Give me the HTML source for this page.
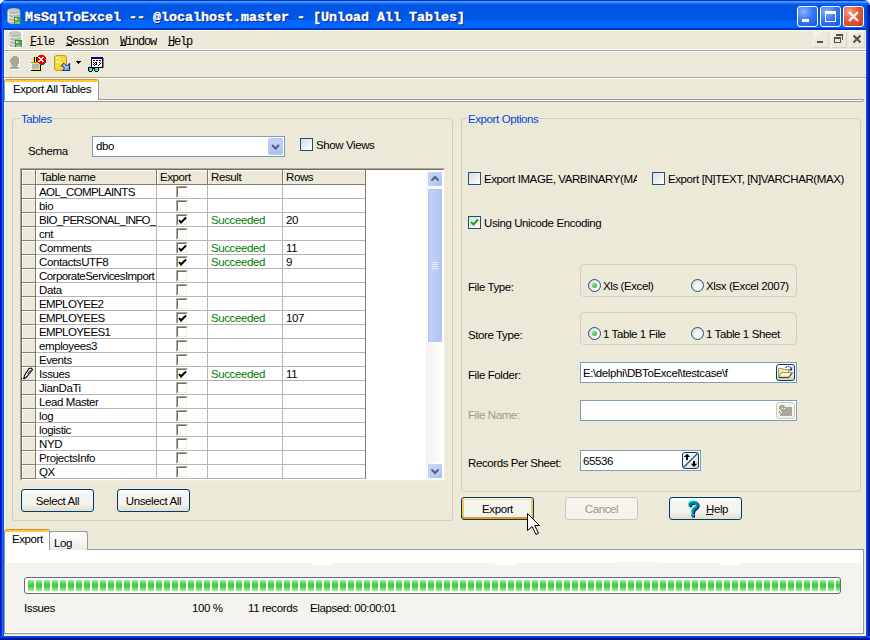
<!DOCTYPE html><html><head><meta charset="utf-8"><style>
*{box-sizing:border-box;margin:0;padding:0}
html,body{width:870px;height:640px;overflow:hidden;background:#fff}
body{position:relative;font-family:"Liberation Sans",sans-serif;font-size:11.5px;letter-spacing:-0.4px;color:#000}
.abs{position:absolute}
.t{position:absolute;white-space:pre;line-height:14px}
#win{position:absolute;left:0;top:0;width:870px;height:640px;background:#ECE9D8;border-radius:6px 6px 0 0;overflow:hidden}
#title{position:absolute;left:0;top:0;width:870px;height:30px;
 background:linear-gradient(180deg,#0030C8 0,#0030C8 1px,#3D95FF 1px,#3D95FF 3px,#0A66F2 3px,#0A66F2 5px,#0055E3 5px,#0056E6 20px,#0066FF 20px,#0066FF 28px,#0035C8 28px,#0035C8 30px)}
.mono{font-family:"Liberation Mono",monospace}
.gb{position:absolute;border:1px solid #D0D0BF;border-radius:3px}
.gbl{position:absolute;color:#0046D5;background:#ECE9D8;padding:0 1px;white-space:pre;line-height:14px}
.btn{position:absolute;border:1px solid #003C74;border-radius:3px;
 background:linear-gradient(180deg,#FFFFFF 0,#F7F6F2 3px,#F4F3EE 14px,#EAE6D9 17px,#E2DED0 100%);
 text-align:center;line-height:22px;white-space:pre}
.edit{position:absolute;border:1px solid #7F9DB9;background:#fff}
.cb{position:absolute;width:13px;height:13px;border:1px solid #1C5180;
 background:linear-gradient(135deg,#DCDCD7 0%,#FFFFFF 100%)}
.rad{position:absolute;width:13px;height:13px;border-radius:50%;border:1px solid #1C5180;
 background:radial-gradient(circle at 70% 70%,#fff 0%,#F2F2EE 40%,#D5D5CC 100%)}
</style></head><body><div id="win">
<div id="title"></div>
<div class="abs" style="left:865px;top:5px;width:5px;height:25px;background:linear-gradient(90deg,#0050E8 0,#0050E8 1px,#0044D8 1px,#0044D8 2px,#0030C0 2px,#0030C0 3px,#0020A8 3px,#0020A8 4px,#001890 4px)"></div>
<div class="abs" style="left:0;top:4px;width:3px;height:26px;background:linear-gradient(90deg,#0028C8 0,#0028C8 1px,#0040E0 1px,#0040E0 2px,#0058F0 2px)"></div>
<svg class="abs" style="left:7px;top:8px" width="16" height="17" viewBox="0 0 16 17"><path d="M0.8 2.8 Q0.8 0.6 6.8 0.6 Q12.8 0.6 12.8 2.8 V13.2 Q12.8 15.6 6.8 15.6 Q0.8 15.6 0.8 13.2 Z" fill="#B4B4B0" stroke="#C8C8B8" stroke-width="0.8"/><path d="M1.2 5.5 Q6.8 8 12.4 5.5 M1.2 9 Q6.8 11.5 12.4 9 M1.2 12.5 Q6.8 15 12.4 12.5" stroke="#F0F0E8" stroke-width="1.1" fill="none"/><path d="M1.5 3 V13" stroke="#F4F0DC" stroke-width="1.2"/><ellipse cx="6.8" cy="2.8" rx="5.6" ry="1.8" fill="#C8C8C4"/><rect x="7" y="9" width="7" height="7" fill="#3F7F3A"/><rect x="7.8" y="9.8" width="5.4" height="4" fill="#58B058"/><rect x="8" y="10" width="2" height="2" fill="#C8F0C0"/><rect x="8" y="14.5" width="5" height="1" fill="#E8F5E8"/></svg>
<div class="abs mono" style="left:26px;top:10px;font-weight:bold;font-size:13.33px;letter-spacing:0;line-height:18px;color:#0A1C6E;white-space:pre;-webkit-text-stroke:0.35px #0A1C6E">MsSqlToExcel -- @localhost.master - [Unload All Tables]</div>
<div class="abs mono" style="left:25px;top:9px;font-weight:bold;font-size:13.33px;letter-spacing:0;line-height:18px;color:#fff;white-space:pre;-webkit-text-stroke:0.35px #fff">MsSqlToExcel -- @localhost.master - [Unload All Tables]</div>
<div class="abs" style="left:797px;top:6px;width:21px;height:21px;border:1px solid #fff;border-radius:3px;background:radial-gradient(circle at 30% 25%,#8DB2FF 0%,#3C79F2 45%,#1650E0 100%)"><div class="abs" style="left:4px;top:12px;width:7px;height:3px;background:#fff"></div></div>
<div class="abs" style="left:820px;top:6px;width:21px;height:21px;border:1px solid #fff;border-radius:3px;background:radial-gradient(circle at 30% 25%,#8DB2FF 0%,#3C79F2 45%,#1650E0 100%)"><div class="abs" style="left:4px;top:4px;width:11px;height:11px;border:1px solid #fff;border-top-width:3px"></div></div>
<div class="abs" style="left:843px;top:6px;width:21px;height:21px;border:1px solid #fff;border-radius:3px;background:radial-gradient(circle at 30% 25%,#F4A58A 0%,#E4583A 45%,#D23A12 100%)"><svg class="abs" style="left:0;top:0" width="19" height="19"><path d="M5 5 L14 14 M14 5 L5 14" stroke="#fff" stroke-width="2.4"/></svg></div>
<div class="abs" style="left:0;top:29px;width:4px;height:611px;background:linear-gradient(90deg,#0010C0 0,#0010C0 1px,#0828D8 1px,#0828D8 2px,#1A74F0 2px,#1A74F0 3px,#0050E6 3px)"></div>
<div class="abs" style="left:866px;top:29px;width:4px;height:611px;background:linear-gradient(90deg,#0050F0 0,#0050F0 1px,#0040D0 1px,#0040D0 2px,#0020A8 2px,#0020A8 3px,#001090 3px)"></div>
<div class="abs" style="left:0;top:636px;width:870px;height:4px;background:linear-gradient(180deg,#0055F0 0,#0055F0 1px,#0040D0 1px,#0040D0 2px,#0018A0 2px,#0018A0 3px,#001088 3px)"></div>
<div class="abs" style="left:4px;top:30px;width:862px;height:1px;background:#FFF8E8"></div>
<div class="abs" style="left:4px;top:30px;width:1px;height:606px;background:#FFF5DC"></div>
<div class="abs" style="left:865px;top:30px;width:1px;height:606px;background:#F5EED5"></div>
<div class="abs" style="left:4px;top:635px;width:862px;height:1px;background:#F5EED5"></div>
<svg class="abs" style="left:8px;top:31px" width="16" height="17" viewBox="0 0 16 17"><rect x="0" y="0" width="15" height="17" fill="#fff"/><path d="M0.8 2.8 Q0.8 0.6 6.8 0.6 Q12.8 0.6 12.8 2.8 V13.2 Q12.8 15.6 6.8 15.6 Q0.8 15.6 0.8 13.2 Z" fill="#B4B4B0" stroke="#C8C8B8" stroke-width="0.8"/><path d="M1.2 5.5 Q6.8 8 12.4 5.5 M1.2 9 Q6.8 11.5 12.4 9 M1.2 12.5 Q6.8 15 12.4 12.5" stroke="#F0F0E8" stroke-width="1.1" fill="none"/><path d="M1.5 3 V13" stroke="#F4F0DC" stroke-width="1.2"/><ellipse cx="6.8" cy="2.8" rx="5.6" ry="1.8" fill="#C8C8C4"/><rect x="7" y="9" width="7" height="7" fill="#3F7F3A"/><rect x="7.8" y="9.8" width="5.4" height="4" fill="#58B058"/><rect x="8" y="10" width="2" height="2" fill="#C8F0C0"/><rect x="8" y="14.5" width="5" height="1" fill="#E8F5E8"/></svg>
<div class="abs mono" style="left:30px;top:35px;font-size:12px;letter-spacing:-1.2px;line-height:14px;white-space:pre">File</div>
<div class="abs" style="left:30px;top:45px;width:6px;height:1px;background:#000"></div>
<div class="abs mono" style="left:66px;top:35px;font-size:12px;letter-spacing:-1.2px;line-height:14px;white-space:pre">Session</div>
<div class="abs" style="left:66px;top:45px;width:6px;height:1px;background:#000"></div>
<div class="abs mono" style="left:120px;top:35px;font-size:12px;letter-spacing:-1.2px;line-height:14px;white-space:pre">Window</div>
<div class="abs" style="left:120px;top:45px;width:6px;height:1px;background:#000"></div>
<div class="abs mono" style="left:168px;top:35px;font-size:12px;letter-spacing:-1.2px;line-height:14px;white-space:pre">Help</div>
<div class="abs" style="left:168px;top:45px;width:6px;height:1px;background:#000"></div>
<div class="abs" style="left:813px;top:31px;width:16px;height:17px;background:linear-gradient(135deg,#F8F6EE 0%,#ECE9D8 35%,#ECE9D8 100%);border:1px solid #F4F2EA;border-right-color:#DCD8C8;border-bottom-color:#D8D4C4"><div class="abs" style="left:3px;top:9px;width:6px;height:2px;background:#505050"></div></div>
<div class="abs" style="left:831px;top:31px;width:16px;height:17px;background:linear-gradient(135deg,#F8F6EE 0%,#ECE9D8 35%,#ECE9D8 100%);border:1px solid #F4F2EA;border-right-color:#DCD8C8;border-bottom-color:#D8D4C4"><div class="abs" style="left:4px;top:2px;width:7px;height:6px;border-top:2px solid #505050;border-right:1px solid #505050"></div><div class="abs" style="left:2px;top:5px;width:7px;height:6px;border:1px solid #505050;border-top-width:2px;background:#ECE9D8"></div></div>
<div class="abs" style="left:849px;top:31px;width:16px;height:17px;background:linear-gradient(135deg,#F8F6EE 0%,#ECE9D8 35%,#ECE9D8 100%);border:1px solid #F4F2EA;border-right-color:#DCD8C8;border-bottom-color:#D8D4C4"><svg class="abs" style="left:0;top:0" width="15" height="16"><path d="M3.5 3.5 L10.5 10.5 M10.5 3.5 L3.5 10.5" stroke="#505050" stroke-width="2"/></svg></div>
<div class="abs" style="left:4px;top:49px;width:862px;height:1px;background:#FFFFFF"></div>
<div class="abs" style="left:4px;top:50px;width:862px;height:1px;background:#ACA899"></div>
<div class="abs" style="left:4px;top:51px;width:862px;height:1px;background:#fff"></div>
<svg class="abs" style="left:0;top:0" width="110" height="80" shape-rendering="crispEdges"><rect x="13" y="56" width="4" height="1" fill="#ACA899"/><rect x="12" y="57" width="6" height="1" fill="#ACA899"/><rect x="11" y="58" width="8" height="1" fill="#ACA899"/><rect x="10" y="59" width="9" height="1" fill="#ACA899"/><rect x="10" y="60" width="9" height="1" fill="#ACA899"/><rect x="10" y="61" width="9" height="1" fill="#ACA899"/><rect x="10" y="62" width="9" height="1" fill="#ACA899"/><rect x="11" y="63" width="8" height="1" fill="#ACA899"/><rect x="11" y="64" width="7" height="1" fill="#ACA899"/><rect x="12" y="65" width="6" height="1" fill="#ACA899"/><rect x="12" y="66" width="5" height="1" fill="#ACA899"/><rect x="10" y="67" width="9" height="1" fill="#ACA899"/><rect x="10" y="68" width="9" height="1" fill="#ACA899"/><rect x="19" y="59" width="1" height="1" fill="#FFFFFF"/><rect x="19" y="60" width="1" height="1" fill="#FFFFFF"/><rect x="19" y="62" width="1" height="1" fill="#FFFFFF"/><rect x="19" y="63" width="1" height="1" fill="#FFFFFF"/><rect x="18" y="64" width="2" height="1" fill="#FFFFFF"/><rect x="18" y="65" width="1" height="1" fill="#FFFFFF"/><rect x="17" y="66" width="1" height="1" fill="#FFFFFF"/><rect x="11" y="69" width="9" height="1" fill="#FFFFFF"/><rect x="31" y="62" width="8" height="1" fill="#8C8C80"/><rect x="31" y="63" width="1" height="7" fill="#FFFFFF"/><rect x="32" y="63" width="8" height="1" fill="#F8F000"/><rect x="32" y="64" width="7" height="5" fill="#B4B4C4"/><rect x="39" y="63" width="1" height="7" fill="#F8F000"/><rect x="32" y="69" width="8" height="1" fill="#F8F000"/><rect x="40" y="63" width="1" height="8" fill="#000"/><rect x="31" y="70" width="10" height="1" fill="#000"/><rect x="33" y="57" width="1" height="5" fill="#F8F000"/><rect x="34" y="56" width="3" height="1" fill="#F8F000"/><rect x="34" y="57" width="1" height="5" fill="#000"/><rect x="35" y="57" width="1" height="5" fill="#E8E8E0"/><rect x="36" y="57" width="1" height="5" fill="#000"/><rect x="39" y="55" width="5" height="1" fill="#F00000"/><rect x="38" y="56" width="7" height="1" fill="#F00000"/><rect x="37" y="57" width="9" height="1" fill="#F00000"/><rect x="37" y="58" width="9" height="1" fill="#F00000"/><rect x="37" y="59" width="9" height="1" fill="#F00000"/><rect x="37" y="60" width="9" height="1" fill="#F00000"/><rect x="37" y="61" width="9" height="1" fill="#F00000"/><rect x="38" y="62" width="7" height="1" fill="#F00000"/><rect x="39" y="63" width="5" height="1" fill="#F00000"/><rect x="45" y="62" width="1" height="1" fill="#205050"/><rect x="44" y="63" width="1" height="1" fill="#205050"/><rect x="40" y="64" width="4" height="1" fill="#205050"/><rect x="38" y="57" width="2" height="1" fill="#FFFFFF"/><rect x="42" y="57" width="2" height="1" fill="#FFFFFF"/><rect x="39" y="58" width="2" height="1" fill="#FFFFFF"/><rect x="41" y="58" width="2" height="1" fill="#FFFFFF"/><rect x="40" y="59" width="2" height="1" fill="#FFFFFF"/><rect x="40" y="59" width="2" height="1" fill="#FFFFFF"/><rect x="41" y="60" width="2" height="1" fill="#FFFFFF"/><rect x="39" y="60" width="2" height="1" fill="#FFFFFF"/><rect x="42" y="61" width="2" height="1" fill="#FFFFFF"/><rect x="38" y="61" width="2" height="1" fill="#FFFFFF"/><rect x="76" y="61" width="5" height="1" fill="#000"/><rect x="77" y="62" width="3" height="1" fill="#000"/><rect x="78" y="63" width="1" height="1" fill="#000"/><rect x="91" y="57" width="12" height="2" fill="#000080"/><rect x="91" y="59" width="1" height="9" fill="#000"/><rect x="102" y="59" width="1" height="9" fill="#000"/><rect x="92" y="59" width="10" height="8" fill="#FFFFFF"/><rect x="91" y="67" width="12" height="1" fill="#000"/><rect x="103" y="58" width="1" height="10" fill="#808080"/><rect x="93" y="60" width="2" height="1" fill="#000"/><rect x="96" y="60" width="2" height="1" fill="#000"/><rect x="99" y="60" width="2" height="1" fill="#000"/><rect x="93" y="62" width="1" height="1" fill="#000"/><rect x="95" y="62" width="2" height="1" fill="#000"/><rect x="99" y="62" width="1" height="1" fill="#000"/><rect x="94" y="63" width="1" height="1" fill="#000"/><rect x="96" y="63" width="1" height="2" fill="#000"/><rect x="93" y="64" width="1" height="1" fill="#000"/><rect x="95" y="64" width="1" height="1" fill="#000"/><rect x="100" y="63" width="1" height="1" fill="#000"/><rect x="99" y="64" width="1" height="1" fill="#000"/><rect x="98" y="65" width="1" height="1" fill="#000"/><rect x="94" y="65" width="1" height="1" fill="#000"/><rect x="88" y="67" width="5" height="1" fill="#000"/><rect x="88" y="68" width="1" height="3" fill="#000"/><rect x="89" y="68" width="3" height="3" fill="#00E8F0"/><rect x="92" y="68" width="4" height="1" fill="#000"/><rect x="89" y="71" width="3" height="1" fill="#000"/><rect x="92" y="69" width="1" height="2" fill="#000"/><rect x="94" y="67" width="5" height="1" fill="#000"/><rect x="94" y="68" width="1" height="3" fill="#000"/><rect x="95" y="68" width="3" height="3" fill="#00E8F0"/><rect x="98" y="68" width="1" height="3" fill="#000"/><rect x="95" y="71" width="3" height="1" fill="#000"/><rect x="90" y="70" width="1" height="1" fill="#FFC0C0"/><rect x="96" y="70" width="1" height="1" fill="#FFC0C0"/></svg>
<svg class="abs" style="left:0;top:0" width="110" height="80">
<path d="M54.5 57.5 Q54.5 55.5 57 55.5 H64 Q66.5 55.5 66.5 57.5 V68 Q66.5 70.5 64 70.5 H57 Q54.5 70.5 54.5 68 Z" fill="#F4D838" stroke="#B49A40" stroke-width="1"/>
<path d="M56 58 Q58 57 60 59 M56 62 Q58 61 61 63" stroke="#FFF8A0" stroke-width="1.5" fill="none"/>
<path d="M60 66 Q62 67 64 65" stroke="#E8A818" stroke-width="1.5" fill="none"/>
<path d="M61.5 65.5 L63.8 63.2 L66.8 66.2 L69.5 63.3 V70.5 H62.3 L64.6 68.2 Z" fill="#70A8E8" stroke="#101830" stroke-width="0.9"/>
<path d="M63.5 64.5 L66 67 M65 69 L68 66" stroke="#A0C8FF" stroke-width="1.2"/>
<path d="M62.3 70.5 H69.5 V63.3" stroke="#1830A0" stroke-width="1.2" fill="none"/>
</svg>
<div class="abs" style="left:4px;top:77px;width:862px;height:1px;background:#ACA899"></div>
<div class="abs" style="left:4px;top:78px;width:862px;height:1px;background:#fff"></div>
<div class="abs" style="left:4px;top:99px;width:860px;height:3px;border:1px solid #919B9C;border-top-color:#919B9C;background:#fff;border-radius:0 0 2px 0"></div>
<div class="abs" style="left:4px;top:79px;width:95px;height:21px;background:#fff;border-left:1px solid #919B9C;border-right:1px solid #919B9C;border-radius:3px 3px 0 0"></div>
<div class="abs" style="left:5px;top:79px;width:93px;height:3px;background:linear-gradient(180deg,#E68B2C 0,#E68B2C 1px,#FFC73C 1px,#FFC73C 3px);border-radius:2px 2px 0 0"></div>
<div class="t" style="left:13px;top:82px">Export All Tables</div>
<div class="abs" style="left:5px;top:99px;width:93px;height:2px;background:#fff"></div>
<div class="gb" style="left:12px;top:118px;width:441px;height:403px"></div>
<div class="gbl" style="left:20px;top:112px">Tables</div>
<div class="t" style="left:28px;top:144px">Schema</div>
<div class="edit" style="left:92px;top:136px;width:193px;height:21px"></div>
<div class="t" style="left:96px;top:139px">dbo</div>
<div class="abs" style="left:268px;top:138px;width:15px;height:17px;border-radius:2px;background:linear-gradient(180deg,#C6D3F7 0%,#BACAF5 60%,#A9BDF0 100%);border:1px solid #B9C9EF"></div>
<svg class="abs" style="left:268px;top:138px" width="15" height="17"><path d="M4 7 L7.5 10.5 L11 7" stroke="#4D6185" stroke-width="2" fill="none"/></svg>
<div class="cb" style="left:300px;top:138px"></div>
<div class="t" style="left:316px;top:138px">Show Views</div>
<div class="abs" style="left:20px;top:168px;width:425px;height:313px;border:1px solid #ACA899;border-right-color:#F1EFE2;border-bottom-color:#F1EFE2"></div>
<div class="abs" style="left:21px;top:169px;width:423px;height:311px;border:1px solid #716F64;border-right-color:#fff;border-bottom-color:#fff;background:#fff"></div>
<div class="abs" style="left:22px;top:170px;width:343px;height:14px;background:#ECE9D8"></div>
<div class="abs" style="left:22px;top:170px;width:13px;height:14px;border-top:1px solid #fff;border-left:1px solid #fff"></div>
<div class="abs" style="left:36px;top:170px;width:120px;height:14px;border-top:1px solid #fff;border-left:1px solid #fff"></div>
<div class="abs" style="left:157px;top:170px;width:50px;height:14px;border-top:1px solid #fff;border-left:1px solid #fff"></div>
<div class="abs" style="left:208px;top:170px;width:74px;height:14px;border-top:1px solid #fff;border-left:1px solid #fff"></div>
<div class="abs" style="left:283px;top:170px;width:82px;height:14px;border-top:1px solid #fff;border-left:1px solid #fff"></div>
<div class="abs" style="left:35px;top:170px;width:1px;height:15px;background:#7F7D72"></div>
<div class="abs" style="left:156px;top:170px;width:1px;height:15px;background:#7F7D72"></div>
<div class="abs" style="left:207px;top:170px;width:1px;height:15px;background:#7F7D72"></div>
<div class="abs" style="left:282px;top:170px;width:1px;height:15px;background:#7F7D72"></div>
<div class="abs" style="left:365px;top:170px;width:1px;height:15px;background:#7F7D72"></div>
<div class="abs" style="left:22px;top:184px;width:344px;height:1px;background:#7F7D72"></div>
<div class="t" style="left:40px;top:170px">Table name</div>
<div class="t" style="left:160px;top:170px">Export</div>
<div class="t" style="left:211px;top:170px">Result</div>
<div class="t" style="left:286px;top:170px">Rows</div>
<div class="abs" style="left:22px;top:185px;width:13px;height:13px;background:#ECE9D8;border-top:1px solid #fff;border-left:1px solid #fff"></div>
<div class="abs" style="left:22px;top:198px;width:344px;height:1px;background:#B5B5B5"></div>
<div class="abs" style="left:22px;top:198px;width:14px;height:1px;background:#808080"></div>
<div class="abs" style="left:35px;top:185px;width:1px;height:14px;background:#7F7D72"></div>
<div class="t" style="left:39px;top:185px;width:118px;overflow:hidden;letter-spacing:-0.6px">AOL_COMPLAINTS</div>
<div class="abs" style="left:176px;top:186px;width:12px;height:12px;border:1px solid #ACA899;border-right-color:#fff;border-bottom-color:#fff"><div class="abs" style="left:0;top:0;width:10px;height:10px;border:1px solid #716F64;border-right-color:#F1EFE2;border-bottom-color:#F1EFE2;background:#fff"></div></div>
<div class="abs" style="left:22px;top:199px;width:13px;height:13px;background:#ECE9D8;border-top:1px solid #fff;border-left:1px solid #fff"></div>
<div class="abs" style="left:22px;top:212px;width:344px;height:1px;background:#B5B5B5"></div>
<div class="abs" style="left:22px;top:212px;width:14px;height:1px;background:#808080"></div>
<div class="abs" style="left:35px;top:199px;width:1px;height:14px;background:#7F7D72"></div>
<div class="t" style="left:39px;top:199px;width:118px;overflow:hidden;letter-spacing:-0.4px">bio</div>
<div class="abs" style="left:176px;top:200px;width:12px;height:12px;border:1px solid #ACA899;border-right-color:#fff;border-bottom-color:#fff"><div class="abs" style="left:0;top:0;width:10px;height:10px;border:1px solid #716F64;border-right-color:#F1EFE2;border-bottom-color:#F1EFE2;background:#fff"></div></div>
<div class="abs" style="left:22px;top:213px;width:13px;height:13px;background:#ECE9D8;border-top:1px solid #fff;border-left:1px solid #fff"></div>
<div class="abs" style="left:22px;top:226px;width:344px;height:1px;background:#B5B5B5"></div>
<div class="abs" style="left:22px;top:226px;width:14px;height:1px;background:#808080"></div>
<div class="abs" style="left:35px;top:213px;width:1px;height:14px;background:#7F7D72"></div>
<div class="t" style="left:39px;top:213px;width:118px;overflow:hidden;letter-spacing:-0.7px">BIO_PERSONAL_INFO_</div>
<div class="abs" style="left:176px;top:214px;width:12px;height:12px;border:1px solid #ACA899;border-right-color:#fff;border-bottom-color:#fff"><div class="abs" style="left:0;top:0;width:10px;height:10px;border:1px solid #716F64;border-right-color:#F1EFE2;border-bottom-color:#F1EFE2;background:#fff"></div></div>
<svg class="abs" style="left:178px;top:216px" width="9" height="9"><path d="M1 4 L3 6.5 L8 1.5" stroke="#000" stroke-width="2" fill="none"/></svg>
<div class="t" style="left:211px;top:213px;color:#008000">Succeeded</div>
<div class="t" style="left:286px;top:213px">20</div>
<div class="abs" style="left:22px;top:227px;width:13px;height:13px;background:#ECE9D8;border-top:1px solid #fff;border-left:1px solid #fff"></div>
<div class="abs" style="left:22px;top:240px;width:344px;height:1px;background:#B5B5B5"></div>
<div class="abs" style="left:22px;top:240px;width:14px;height:1px;background:#808080"></div>
<div class="abs" style="left:35px;top:227px;width:1px;height:14px;background:#7F7D72"></div>
<div class="t" style="left:39px;top:227px;width:118px;overflow:hidden;letter-spacing:-0.4px">cnt</div>
<div class="abs" style="left:176px;top:228px;width:12px;height:12px;border:1px solid #ACA899;border-right-color:#fff;border-bottom-color:#fff"><div class="abs" style="left:0;top:0;width:10px;height:10px;border:1px solid #716F64;border-right-color:#F1EFE2;border-bottom-color:#F1EFE2;background:#fff"></div></div>
<div class="abs" style="left:22px;top:241px;width:13px;height:13px;background:#ECE9D8;border-top:1px solid #fff;border-left:1px solid #fff"></div>
<div class="abs" style="left:22px;top:254px;width:344px;height:1px;background:#B5B5B5"></div>
<div class="abs" style="left:22px;top:254px;width:14px;height:1px;background:#808080"></div>
<div class="abs" style="left:35px;top:241px;width:1px;height:14px;background:#7F7D72"></div>
<div class="t" style="left:39px;top:241px;width:118px;overflow:hidden;letter-spacing:-0.4px">Comments</div>
<div class="abs" style="left:176px;top:242px;width:12px;height:12px;border:1px solid #ACA899;border-right-color:#fff;border-bottom-color:#fff"><div class="abs" style="left:0;top:0;width:10px;height:10px;border:1px solid #716F64;border-right-color:#F1EFE2;border-bottom-color:#F1EFE2;background:#fff"></div></div>
<svg class="abs" style="left:178px;top:244px" width="9" height="9"><path d="M1 4 L3 6.5 L8 1.5" stroke="#000" stroke-width="2" fill="none"/></svg>
<div class="t" style="left:211px;top:241px;color:#008000">Succeeded</div>
<div class="t" style="left:286px;top:241px">11</div>
<div class="abs" style="left:22px;top:255px;width:13px;height:13px;background:#ECE9D8;border-top:1px solid #fff;border-left:1px solid #fff"></div>
<div class="abs" style="left:22px;top:268px;width:344px;height:1px;background:#B5B5B5"></div>
<div class="abs" style="left:22px;top:268px;width:14px;height:1px;background:#808080"></div>
<div class="abs" style="left:35px;top:255px;width:1px;height:14px;background:#7F7D72"></div>
<div class="t" style="left:39px;top:255px;width:118px;overflow:hidden;letter-spacing:-0.4px">ContactsUTF8</div>
<div class="abs" style="left:176px;top:256px;width:12px;height:12px;border:1px solid #ACA899;border-right-color:#fff;border-bottom-color:#fff"><div class="abs" style="left:0;top:0;width:10px;height:10px;border:1px solid #716F64;border-right-color:#F1EFE2;border-bottom-color:#F1EFE2;background:#fff"></div></div>
<svg class="abs" style="left:178px;top:258px" width="9" height="9"><path d="M1 4 L3 6.5 L8 1.5" stroke="#000" stroke-width="2" fill="none"/></svg>
<div class="t" style="left:211px;top:255px;color:#008000">Succeeded</div>
<div class="t" style="left:286px;top:255px">9</div>
<div class="abs" style="left:22px;top:269px;width:13px;height:13px;background:#ECE9D8;border-top:1px solid #fff;border-left:1px solid #fff"></div>
<div class="abs" style="left:22px;top:282px;width:344px;height:1px;background:#B5B5B5"></div>
<div class="abs" style="left:22px;top:282px;width:14px;height:1px;background:#808080"></div>
<div class="abs" style="left:35px;top:269px;width:1px;height:14px;background:#7F7D72"></div>
<div class="t" style="left:39px;top:269px;width:118px;overflow:hidden;letter-spacing:-0.55px">CorporateServicesImport</div>
<div class="abs" style="left:176px;top:270px;width:12px;height:12px;border:1px solid #ACA899;border-right-color:#fff;border-bottom-color:#fff"><div class="abs" style="left:0;top:0;width:10px;height:10px;border:1px solid #716F64;border-right-color:#F1EFE2;border-bottom-color:#F1EFE2;background:#fff"></div></div>
<div class="abs" style="left:22px;top:283px;width:13px;height:13px;background:#ECE9D8;border-top:1px solid #fff;border-left:1px solid #fff"></div>
<div class="abs" style="left:22px;top:296px;width:344px;height:1px;background:#B5B5B5"></div>
<div class="abs" style="left:22px;top:296px;width:14px;height:1px;background:#808080"></div>
<div class="abs" style="left:35px;top:283px;width:1px;height:14px;background:#7F7D72"></div>
<div class="t" style="left:39px;top:283px;width:118px;overflow:hidden;letter-spacing:-0.4px">Data</div>
<div class="abs" style="left:176px;top:284px;width:12px;height:12px;border:1px solid #ACA899;border-right-color:#fff;border-bottom-color:#fff"><div class="abs" style="left:0;top:0;width:10px;height:10px;border:1px solid #716F64;border-right-color:#F1EFE2;border-bottom-color:#F1EFE2;background:#fff"></div></div>
<div class="abs" style="left:22px;top:297px;width:13px;height:13px;background:#ECE9D8;border-top:1px solid #fff;border-left:1px solid #fff"></div>
<div class="abs" style="left:22px;top:310px;width:344px;height:1px;background:#B5B5B5"></div>
<div class="abs" style="left:22px;top:310px;width:14px;height:1px;background:#808080"></div>
<div class="abs" style="left:35px;top:297px;width:1px;height:14px;background:#7F7D72"></div>
<div class="t" style="left:39px;top:297px;width:118px;overflow:hidden;letter-spacing:-0.6px">EMPLOYEE2</div>
<div class="abs" style="left:176px;top:298px;width:12px;height:12px;border:1px solid #ACA899;border-right-color:#fff;border-bottom-color:#fff"><div class="abs" style="left:0;top:0;width:10px;height:10px;border:1px solid #716F64;border-right-color:#F1EFE2;border-bottom-color:#F1EFE2;background:#fff"></div></div>
<div class="abs" style="left:22px;top:311px;width:13px;height:13px;background:#ECE9D8;border-top:1px solid #fff;border-left:1px solid #fff"></div>
<div class="abs" style="left:22px;top:324px;width:344px;height:1px;background:#B5B5B5"></div>
<div class="abs" style="left:22px;top:324px;width:14px;height:1px;background:#808080"></div>
<div class="abs" style="left:35px;top:311px;width:1px;height:14px;background:#7F7D72"></div>
<div class="t" style="left:39px;top:311px;width:118px;overflow:hidden;letter-spacing:-0.6px">EMPLOYEES</div>
<div class="abs" style="left:176px;top:312px;width:12px;height:12px;border:1px solid #ACA899;border-right-color:#fff;border-bottom-color:#fff"><div class="abs" style="left:0;top:0;width:10px;height:10px;border:1px solid #716F64;border-right-color:#F1EFE2;border-bottom-color:#F1EFE2;background:#fff"></div></div>
<svg class="abs" style="left:178px;top:314px" width="9" height="9"><path d="M1 4 L3 6.5 L8 1.5" stroke="#000" stroke-width="2" fill="none"/></svg>
<div class="t" style="left:211px;top:311px;color:#008000">Succeeded</div>
<div class="t" style="left:286px;top:311px">107</div>
<div class="abs" style="left:22px;top:325px;width:13px;height:13px;background:#ECE9D8;border-top:1px solid #fff;border-left:1px solid #fff"></div>
<div class="abs" style="left:22px;top:338px;width:344px;height:1px;background:#B5B5B5"></div>
<div class="abs" style="left:22px;top:338px;width:14px;height:1px;background:#808080"></div>
<div class="abs" style="left:35px;top:325px;width:1px;height:14px;background:#7F7D72"></div>
<div class="t" style="left:39px;top:325px;width:118px;overflow:hidden;letter-spacing:-0.6px">EMPLOYEES1</div>
<div class="abs" style="left:176px;top:326px;width:12px;height:12px;border:1px solid #ACA899;border-right-color:#fff;border-bottom-color:#fff"><div class="abs" style="left:0;top:0;width:10px;height:10px;border:1px solid #716F64;border-right-color:#F1EFE2;border-bottom-color:#F1EFE2;background:#fff"></div></div>
<div class="abs" style="left:22px;top:339px;width:13px;height:13px;background:#ECE9D8;border-top:1px solid #fff;border-left:1px solid #fff"></div>
<div class="abs" style="left:22px;top:352px;width:344px;height:1px;background:#B5B5B5"></div>
<div class="abs" style="left:22px;top:352px;width:14px;height:1px;background:#808080"></div>
<div class="abs" style="left:35px;top:339px;width:1px;height:14px;background:#7F7D72"></div>
<div class="t" style="left:39px;top:339px;width:118px;overflow:hidden;letter-spacing:-0.4px">employees3</div>
<div class="abs" style="left:176px;top:340px;width:12px;height:12px;border:1px solid #ACA899;border-right-color:#fff;border-bottom-color:#fff"><div class="abs" style="left:0;top:0;width:10px;height:10px;border:1px solid #716F64;border-right-color:#F1EFE2;border-bottom-color:#F1EFE2;background:#fff"></div></div>
<div class="abs" style="left:22px;top:353px;width:13px;height:13px;background:#ECE9D8;border-top:1px solid #fff;border-left:1px solid #fff"></div>
<div class="abs" style="left:22px;top:366px;width:344px;height:1px;background:#B5B5B5"></div>
<div class="abs" style="left:22px;top:366px;width:14px;height:1px;background:#808080"></div>
<div class="abs" style="left:35px;top:353px;width:1px;height:14px;background:#7F7D72"></div>
<div class="t" style="left:39px;top:353px;width:118px;overflow:hidden;letter-spacing:-0.4px">Events</div>
<div class="abs" style="left:176px;top:354px;width:12px;height:12px;border:1px solid #ACA899;border-right-color:#fff;border-bottom-color:#fff"><div class="abs" style="left:0;top:0;width:10px;height:10px;border:1px solid #716F64;border-right-color:#F1EFE2;border-bottom-color:#F1EFE2;background:#fff"></div></div>
<div class="abs" style="left:22px;top:367px;width:13px;height:13px;background:#ECE9D8;border-top:1px solid #fff;border-left:1px solid #fff"></div>
<div class="abs" style="left:22px;top:380px;width:344px;height:1px;background:#B5B5B5"></div>
<div class="abs" style="left:22px;top:380px;width:14px;height:1px;background:#808080"></div>
<div class="abs" style="left:35px;top:367px;width:1px;height:14px;background:#7F7D72"></div>
<div class="t" style="left:39px;top:367px;width:118px;overflow:hidden;letter-spacing:-0.4px">Issues</div>
<div class="abs" style="left:176px;top:368px;width:12px;height:12px;border:1px solid #ACA899;border-right-color:#fff;border-bottom-color:#fff"><div class="abs" style="left:0;top:0;width:10px;height:10px;border:1px solid #716F64;border-right-color:#F1EFE2;border-bottom-color:#F1EFE2;background:#fff"></div></div>
<svg class="abs" style="left:178px;top:370px" width="9" height="9"><path d="M1 4 L3 6.5 L8 1.5" stroke="#000" stroke-width="2" fill="none"/></svg>
<div class="t" style="left:211px;top:367px;color:#008000">Succeeded</div>
<div class="t" style="left:286px;top:367px">11</div>
<div class="abs" style="left:22px;top:381px;width:13px;height:13px;background:#ECE9D8;border-top:1px solid #fff;border-left:1px solid #fff"></div>
<div class="abs" style="left:22px;top:394px;width:344px;height:1px;background:#B5B5B5"></div>
<div class="abs" style="left:22px;top:394px;width:14px;height:1px;background:#808080"></div>
<div class="abs" style="left:35px;top:381px;width:1px;height:14px;background:#7F7D72"></div>
<div class="t" style="left:39px;top:381px;width:118px;overflow:hidden;letter-spacing:-0.4px">JianDaTi</div>
<div class="abs" style="left:176px;top:382px;width:12px;height:12px;border:1px solid #ACA899;border-right-color:#fff;border-bottom-color:#fff"><div class="abs" style="left:0;top:0;width:10px;height:10px;border:1px solid #716F64;border-right-color:#F1EFE2;border-bottom-color:#F1EFE2;background:#fff"></div></div>
<div class="abs" style="left:22px;top:395px;width:13px;height:13px;background:#ECE9D8;border-top:1px solid #fff;border-left:1px solid #fff"></div>
<div class="abs" style="left:22px;top:408px;width:344px;height:1px;background:#B5B5B5"></div>
<div class="abs" style="left:22px;top:408px;width:14px;height:1px;background:#808080"></div>
<div class="abs" style="left:35px;top:395px;width:1px;height:14px;background:#7F7D72"></div>
<div class="t" style="left:39px;top:395px;width:118px;overflow:hidden;letter-spacing:-0.4px">Lead Master</div>
<div class="abs" style="left:176px;top:396px;width:12px;height:12px;border:1px solid #ACA899;border-right-color:#fff;border-bottom-color:#fff"><div class="abs" style="left:0;top:0;width:10px;height:10px;border:1px solid #716F64;border-right-color:#F1EFE2;border-bottom-color:#F1EFE2;background:#fff"></div></div>
<div class="abs" style="left:22px;top:409px;width:13px;height:13px;background:#ECE9D8;border-top:1px solid #fff;border-left:1px solid #fff"></div>
<div class="abs" style="left:22px;top:422px;width:344px;height:1px;background:#B5B5B5"></div>
<div class="abs" style="left:22px;top:422px;width:14px;height:1px;background:#808080"></div>
<div class="abs" style="left:35px;top:409px;width:1px;height:14px;background:#7F7D72"></div>
<div class="t" style="left:39px;top:409px;width:118px;overflow:hidden;letter-spacing:-0.4px">log</div>
<div class="abs" style="left:176px;top:410px;width:12px;height:12px;border:1px solid #ACA899;border-right-color:#fff;border-bottom-color:#fff"><div class="abs" style="left:0;top:0;width:10px;height:10px;border:1px solid #716F64;border-right-color:#F1EFE2;border-bottom-color:#F1EFE2;background:#fff"></div></div>
<div class="abs" style="left:22px;top:423px;width:13px;height:13px;background:#ECE9D8;border-top:1px solid #fff;border-left:1px solid #fff"></div>
<div class="abs" style="left:22px;top:436px;width:344px;height:1px;background:#B5B5B5"></div>
<div class="abs" style="left:22px;top:436px;width:14px;height:1px;background:#808080"></div>
<div class="abs" style="left:35px;top:423px;width:1px;height:14px;background:#7F7D72"></div>
<div class="t" style="left:39px;top:423px;width:118px;overflow:hidden;letter-spacing:-0.4px">logistic</div>
<div class="abs" style="left:176px;top:424px;width:12px;height:12px;border:1px solid #ACA899;border-right-color:#fff;border-bottom-color:#fff"><div class="abs" style="left:0;top:0;width:10px;height:10px;border:1px solid #716F64;border-right-color:#F1EFE2;border-bottom-color:#F1EFE2;background:#fff"></div></div>
<div class="abs" style="left:22px;top:437px;width:13px;height:13px;background:#ECE9D8;border-top:1px solid #fff;border-left:1px solid #fff"></div>
<div class="abs" style="left:22px;top:450px;width:344px;height:1px;background:#B5B5B5"></div>
<div class="abs" style="left:22px;top:450px;width:14px;height:1px;background:#808080"></div>
<div class="abs" style="left:35px;top:437px;width:1px;height:14px;background:#7F7D72"></div>
<div class="t" style="left:39px;top:437px;width:118px;overflow:hidden;letter-spacing:-0.4px">NYD</div>
<div class="abs" style="left:176px;top:438px;width:12px;height:12px;border:1px solid #ACA899;border-right-color:#fff;border-bottom-color:#fff"><div class="abs" style="left:0;top:0;width:10px;height:10px;border:1px solid #716F64;border-right-color:#F1EFE2;border-bottom-color:#F1EFE2;background:#fff"></div></div>
<div class="abs" style="left:22px;top:451px;width:13px;height:13px;background:#ECE9D8;border-top:1px solid #fff;border-left:1px solid #fff"></div>
<div class="abs" style="left:22px;top:464px;width:344px;height:1px;background:#B5B5B5"></div>
<div class="abs" style="left:22px;top:464px;width:14px;height:1px;background:#808080"></div>
<div class="abs" style="left:35px;top:451px;width:1px;height:14px;background:#7F7D72"></div>
<div class="t" style="left:39px;top:451px;width:118px;overflow:hidden;letter-spacing:-0.4px">ProjectsInfo</div>
<div class="abs" style="left:176px;top:452px;width:12px;height:12px;border:1px solid #ACA899;border-right-color:#fff;border-bottom-color:#fff"><div class="abs" style="left:0;top:0;width:10px;height:10px;border:1px solid #716F64;border-right-color:#F1EFE2;border-bottom-color:#F1EFE2;background:#fff"></div></div>
<div class="abs" style="left:22px;top:465px;width:13px;height:13px;background:#ECE9D8;border-top:1px solid #fff;border-left:1px solid #fff"></div>
<div class="abs" style="left:22px;top:478px;width:344px;height:1px;background:#B5B5B5"></div>
<div class="abs" style="left:22px;top:478px;width:14px;height:1px;background:#808080"></div>
<div class="abs" style="left:35px;top:465px;width:1px;height:14px;background:#7F7D72"></div>
<div class="t" style="left:39px;top:465px;width:118px;overflow:hidden;letter-spacing:-0.4px">QX</div>
<div class="abs" style="left:176px;top:466px;width:12px;height:12px;border:1px solid #ACA899;border-right-color:#fff;border-bottom-color:#fff"><div class="abs" style="left:0;top:0;width:10px;height:10px;border:1px solid #716F64;border-right-color:#F1EFE2;border-bottom-color:#F1EFE2;background:#fff"></div></div>
<div class="abs" style="left:156px;top:185px;width:1px;height:294px;background:#B5B5B5"></div>
<div class="abs" style="left:207px;top:185px;width:1px;height:294px;background:#B5B5B5"></div>
<div class="abs" style="left:282px;top:185px;width:1px;height:294px;background:#B5B5B5"></div>
<div class="abs" style="left:365px;top:185px;width:1px;height:294px;background:#B5B5B5"></div>
<div class="abs" style="left:365px;top:170px;width:1px;height:309px;background:#7F7D72"></div>
<svg class="abs" style="left:21px;top:367px" width="13" height="13"><path d="M8 1.5 L10 1 L11.5 2.5 L5.5 10 L3.5 11.5 L3 11 L3.5 8.5 Z" fill="#fff" stroke="#000" stroke-width="1.1"/><path d="M6.5 6.5 L9.5 3" stroke="#000" stroke-width="0.8"/><rect x="0" y="11" width="1" height="1" fill="#000"/><rect x="2" y="11" width="1" height="1" fill="#000"/></svg>
<div class="abs" style="left:426px;top:170px;width:17px;height:309px;background:linear-gradient(90deg,#F3F1EC 0%,#FEFEFB 100%)"></div>
<div class="abs" style="left:427px;top:171px;width:16px;height:16px;border-radius:2px;border:1px solid #fff;background:linear-gradient(135deg,#C6D4F7 0%,#BBCDF5 60%,#A8BDEE 100%)"></div><svg class="abs" style="left:427px;top:171px" width="16" height="16"><path d="M4.5 9.5 L8 6 L11.5 9.5" stroke="#4D6185" stroke-width="2" fill="none"/></svg>
<div class="abs" style="left:427px;top:463px;width:16px;height:16px;border-radius:2px;border:1px solid #fff;background:linear-gradient(135deg,#C6D4F7 0%,#BBCDF5 60%,#A8BDEE 100%)"></div><svg class="abs" style="left:427px;top:463px" width="16" height="16"><path d="M4.5 6.5 L8 10 L11.5 6.5" stroke="#4D6185" stroke-width="2" fill="none"/></svg>
<div class="abs" style="left:427px;top:188px;width:16px;height:155px;border-radius:2px;border:1px solid #fff;box-shadow:inset 0 0 0 1px #B0C4F0;background:linear-gradient(90deg,#C0D0F8 0%,#BCCCF6 50%,#B2C4F2 100%)"></div>
<svg class="abs" style="left:430px;top:260px" width="10" height="10"><path d="M2 2.5 H8 M2 4.5 H8 M2 6.5 H8 M2 8.5 H8" stroke="#E8EEFC" stroke-width="1"/></svg>
<div class="btn" style="left:21px;top:489px;width:73px;height:23px">Select All</div>
<div class="btn" style="left:117px;top:489px;width:73px;height:23px">Unselect All</div>
<div class="gb" style="left:461px;top:118px;width:400px;height:374px"></div>
<div class="gbl" style="left:467px;top:112px">Export Options</div>
<div class="cb" style="left:468px;top:172px"></div>
<div class="t" style="left:484px;top:172px;width:153px;overflow:hidden">Export IMAGE, VARBINARY(MAX)</div>
<div class="cb" style="left:652px;top:172px"></div>
<div class="t" style="left:668px;top:172px">Export [N]TEXT, [N]VARCHAR(MAX)</div>
<div class="cb" style="left:468px;top:216px"></div>
<svg class="abs" style="left:468px;top:216px" width="13" height="13"><path d="M3 6 L5.5 8.5 L10 3.5" stroke="#21A121" stroke-width="2" fill="none"/></svg>
<div class="t" style="left:484px;top:216px">Using Unicode Encoding</div>
<div class="t" style="left:468px;top:280px">File Type:</div>
<div class="gb" style="left:580px;top:264px;width:217px;height:33px;border-radius:4px"></div>
<div class="rad" style="left:588px;top:279px"></div><div class="abs" style="left:592px;top:283px;width:5px;height:5px;border-radius:50%;background:radial-gradient(circle at 40% 40%,#8EE88E,#21A121)"></div>
<div class="t" style="left:603px;top:279px">Xls (Excel)</div>
<div class="rad" style="left:691px;top:279px"></div>
<div class="t" style="left:706px;top:279px">Xlsx (Excel 2007)</div>
<div class="t" style="left:468px;top:328px">Store Type:</div>
<div class="gb" style="left:580px;top:312px;width:217px;height:33px;border-radius:4px"></div>
<div class="rad" style="left:588px;top:327px"></div><div class="abs" style="left:592px;top:331px;width:5px;height:5px;border-radius:50%;background:radial-gradient(circle at 40% 40%,#8EE88E,#21A121)"></div>
<div class="t" style="left:603px;top:327px">1 Table 1 File</div>
<div class="rad" style="left:691px;top:327px"></div>
<div class="t" style="left:706px;top:327px">1 Table 1 Sheet</div>
<div class="t" style="left:468px;top:368px">File Folder:</div>
<div class="edit" style="left:580px;top:362px;width:217px;height:21px"></div>
<div class="t" style="left:583px;top:366px">E:\delphi\DBToExcel\testcase\f</div>
<div class="abs" style="left:776px;top:364px;width:19px;height:17px;border:1px solid #003C74;border-radius:3px;background:linear-gradient(180deg,#fff,#ECEBE6 70%,#D6D0C5)"></div>
<svg class="abs" style="left:777px;top:365px" width="17" height="15" viewBox="0 0 17 15">
<path d="M1.5 12 V3.5 H5 L6 4.5 H11.5 V8" fill="#F6E6D6" stroke="#A8A830" stroke-width="1.1"/>
<path d="M1.5 12.2 L4.5 7.5 H15.2 L11.8 12.2 Z" fill="#FAF0E4" stroke="#A8A830" stroke-width="1.1"/>
<path d="M2 12.6 H11.8 L15.3 8" stroke="#303010" stroke-width="1" fill="none"/>
<path d="M8.5 2.8 Q11 0.3 13.8 2.6" stroke="#2828C8" stroke-width="1.1" fill="none" stroke-dasharray="1.5 0.8"/>
<path d="M15.2 1.8 V5.5 H11.5 Z" fill="#2828C8"/>
</svg>
<div class="t" style="left:468px;top:408px;color:#A09C8A">File Name:</div>
<div class="edit" style="left:580px;top:400px;width:217px;height:21px"></div>
<div class="abs" style="left:776px;top:402px;width:19px;height:17px;border:1px solid #CAC8BB;border-radius:3px;background:#F5F4EA"></div>
<svg class="abs" style="left:777px;top:403px" width="17" height="15" shape-rendering="crispEdges"><path d="M2 13 V5 Q2 2 5 2 H7 L8.5 4 H15 V13 Z" fill="#ACA899"/><rect x="5" y="5" width="1" height="1" fill="#fff"/><rect x="7" y="5" width="1" height="1" fill="#fff"/><rect x="2" y="6" width="1" height="1" fill="#fff"/><rect x="3" y="7" width="1" height="2" fill="#fff"/><rect x="4" y="9" width="1" height="1" fill="#fff"/><rect x="2" y="10" width="1" height="3" fill="#F4F3EE"/></svg>
<div class="t" style="left:468px;top:456px">Records Per Sheet:</div>
<div class="edit" style="left:580px;top:450px;width:121px;height:21px"></div>
<div class="t" style="left:583px;top:454px">65536</div>
<div class="abs" style="left:682px;top:452px;width:17px;height:17px;border:1px solid #003C74;border-radius:3px;background:linear-gradient(135deg,#fff 0%,#F0EFEA 50%,#DCD8CC 100%)"></div>
<svg class="abs" style="left:682px;top:452px" width="17" height="17"><path d="M1.5 15.5 L15.5 1.5" stroke="#1C5180" stroke-width="1.3"/>
<path d="M5 1.8 L1.8 5 H4 V8 H6 V5 H8.2 Z" fill="#000"/><path d="M12 15 L8.8 11.8 H11 V9 H13 V11.8 H15.2 Z" fill="#000"/></svg>
<div class="btn" style="left:461px;top:497px;width:73px;height:23px;background:#F4F3EE;box-shadow:inset 0 1px 0 #FFF0CF,inset 0 -2px 0 #E99A10,inset 2px 0 0 #F8C45A,inset -2px 0 0 #F8C45A,inset 0 2px 0 #FCE0A0">Export</div>
<div class="btn" style="left:565px;top:497px;width:73px;height:23px;border-color:#C9C7BA;background:#F4F3EE;color:#9C9886">Cancel</div>
<div class="btn" style="left:669px;top:497px;width:73px;height:23px"></div>
<svg class="abs" style="left:682px;top:498px" width="24" height="22" viewBox="682 498 24 22">
<g fill="none" stroke-width="2.6" stroke-linecap="square">
<path d="M690 505 Q690 502.5 694 502.5 Q697.5 502.5 697.5 505 Q697.5 507 695 508.5 Q693 509.8 693 512" stroke="#000080" transform="translate(0.8,0.9)"/>
<path d="M690 505 Q690 502.5 694 502.5 Q697.5 502.5 697.5 505 Q697.5 507 695 508.5 Q693 509.8 693 512" stroke="#00FFFF" transform="translate(-0.7,-0.7)"/>
<path d="M690 505 Q690 502.5 694 502.5 Q697.5 502.5 697.5 505 Q697.5 507 695 508.5 Q693 509.8 693 512" stroke="#008C8C"/>
</g>
<rect x="692" y="515" width="3" height="2.5" fill="#000080"/><rect x="691" y="514" width="3" height="2.5" fill="#00E0E0"/><rect x="691.6" y="514.6" width="2.4" height="1.9" fill="#008C8C"/>
</svg>
<div class="t" style="left:706px;top:502px">Help</div>
<div class="abs" style="left:706px;top:514px;width:7px;height:1px;background:#000"></div>
<svg class="abs" style="left:527px;top:513px" width="14" height="23" viewBox="0 0 14 23">
<path d="M0.5 0.5 L12.5 12.5 H7.8 L11.5 20.2 L9 21.5 L5.2 13.6 L0.5 17.5 Z" fill="#fff" stroke="#000" stroke-width="1" stroke-linejoin="miter"/></svg>
<div class="abs" style="left:4px;top:549px;width:860px;height:85px;border:1px solid #919B9C;background:#fff"></div>
<div class="abs" style="left:6px;top:563px;width:856px;height:69px;background:#F4F3EE"></div>
<div class="abs" style="left:312px;top:563px;width:21px;height:2px;background:#fff"></div>
<div class="abs" style="left:720px;top:563px;width:20px;height:2px;background:#fff"></div>
<div class="abs" style="left:495px;top:563px;width:21px;height:2px;background:#fff"></div>
<div class="abs" style="left:617px;top:562px;width:41px;height:1px;background:#F4F3EE"></div>
<div class="abs" style="left:49px;top:531px;width:39px;height:19px;border:1px solid #919B9C;border-bottom:none;border-radius:3px 3px 0 0;background:linear-gradient(180deg,#FFFFFF 0%,#F4F3EE 60%,#ECEBE5 100%)"></div>
<div class="t" style="left:54px;top:536px">Log</div>
<div class="abs" style="left:4px;top:529px;width:46px;height:21px;border:1px solid #919B9C;border-bottom:none;border-radius:3px 3px 0 0;background:#fff"></div>
<div class="abs" style="left:5px;top:529px;width:44px;height:3px;background:linear-gradient(180deg,#E68B2C 0,#E68B2C 1px,#FFC73C 1px,#FFC73C 3px);border-radius:2px 2px 0 0"></div>
<div class="t" style="left:12px;top:532px">Export</div>
<div class="abs" style="left:24px;top:577px;width:817px;height:17px;border:1px solid #686868;border-radius:3px;background:#fff"></div>
<div class="abs" style="left:28px;top:580px;width:812px;height:11px;background:linear-gradient(180deg,#A6E9A6 0%,#5ADC5A 30%,#2ED22E 50%,#5ADC5A 70%,#A6E9A6 100%)"></div>
<div class="abs" style="left:28px;top:580px;width:812px;height:11px;background:repeating-linear-gradient(90deg,transparent 0,transparent 0px,transparent 6px,#fff 6px,#fff 8px)"></div>
<div class="t" style="left:24px;top:601px">Issues</div>
<div class="t" style="left:192px;top:601px">100 %</div>
<div class="t" style="left:248px;top:601px">11 records</div>
<div class="t" style="left:310px;top:601px">Elapsed: 00:00:01</div>
</div></body></html>
